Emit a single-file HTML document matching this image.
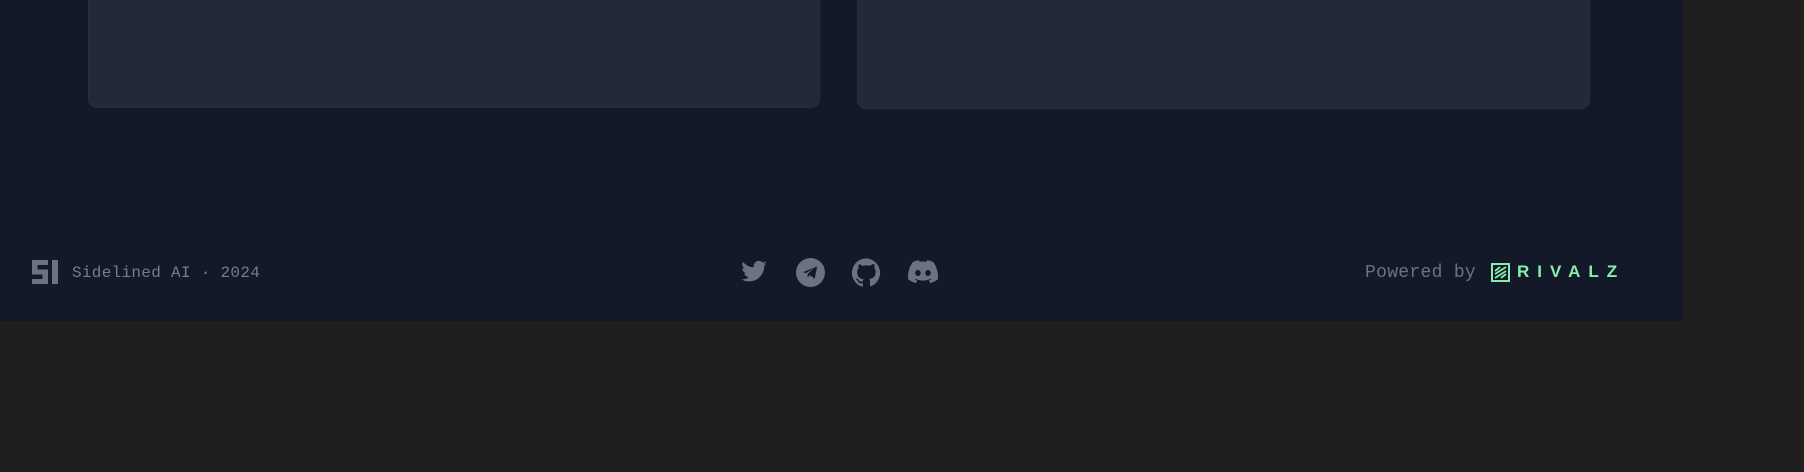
<!DOCTYPE html>
<html><head><style>
html,body{margin:0;padding:0;width:1804px;height:472px;background:#1f1f1f;overflow:hidden}
.page{position:absolute;left:0;top:0;width:1683px;height:321px;background:#131928}
.card{position:absolute;top:-10px;height:118px;background:#232937;border:1px solid #262d3b;border-radius:9px;box-sizing:border-box}
.t{position:absolute;font-family:"Liberation Mono",monospace;color:#6b7280;white-space:nowrap}
</style></head><body>
<div class="page">
<div class="card" style="left:88px;width:732px"></div>
<div class="card" style="left:857px;width:733px;height:119px"></div>
<svg style="position:absolute;left:32px;top:260px" width="27" height="24" viewBox="0 0 27 24">
<path fill="#6b7280" d="M0 0H16V5H5.5V9.5H16V24H0V19H10.5V14.5H0Z"/><rect x="20" y="0" width="6" height="24" fill="#6b7280"/></svg>
<div class="t" style="left:72px;top:264px;font-size:16px;letter-spacing:0.3px;color:#767d8a">Sidelined AI · 2024</div>
<svg style="position:absolute;left:740px;top:258px" width="28" height="28" viewBox="0 0 24 24"><path fill="#6b7280" d="M23 4.6c-.8.4-1.7.6-2.6.7.9-.6 1.6-1.4 2-2.5-.9.5-1.9.9-2.9 1.1a4.5 4.5 0 0 0-7.7 4.1C8 7.8 4.7 6 2.5 3.3c-1.5 2.6.4 5 1.4 5.9-.7 0-1.4-.2-2-.5 0 2.2 1.6 4 3.6 4.4-.7.2-1.4.2-2 .1.6 1.8 2.2 3.1 4.2 3.1A9 9 0 0 1 1 18.2 12.8 12.8 0 0 0 7.9 20c8.3 0 12.9-6.9 12.9-12.9v-.6c.9-.6 1.6-1.4 2.2-2.3z"/></svg>
<svg style="position:absolute;left:796px;top:258px" width="29" height="29" viewBox="0 0 24 24"><circle cx="12" cy="12" r="12" fill="#6b7280"/><path fill="#131928" d="M5.5 11.8 17.5 7l-2 10.3-4-3.1-2 2 .2-3.1 5.3-4.8-6.6 4.1z"/></svg>
<svg style="position:absolute;left:852px;top:258px" width="29" height="29" viewBox="0 0 24 24"><path fill="#6b7280" d="M12 .3a12 12 0 0 0-3.8 23.4c.6.1.8-.3.8-.6v-2.2c-3.3.7-4-1.4-4-1.4-.6-1.4-1.4-1.8-1.4-1.8-1.1-.7.1-.7.1-.7 1.2.1 1.8 1.2 1.8 1.2 1.1 1.8 2.8 1.3 3.5 1 .1-.8.4-1.300.8-1.6-2.7-.3-5.5-1.3-5.5-5.9 0-1.3.5-2.4 1.2-3.2-.1-.3-.5-1.5.1-3.2 0 0 1-.3 3.3 1.2a11.5 11.5 0 0 1 6 0C17.3 4.7 18.3 5 18.3 5c.7 1.7.3 2.9.1 3.2.8.8 1.2 1.9 1.2 3.2 0 4.6-2.8 5.6-5.5 5.9.4.4.8 1.1.8 2.2v3.3c0 .3.2.7.8.6A12 12 0 0 0 12 .3"/></svg>
<svg style="position:absolute;left:908px;top:259px" width="30" height="26" viewBox="0 0 24 19"><path fill="#6b7280" d="M20.3 1.6A19.8 19.8 0 0 0 15.4 0l-.6 1.3a18.4 18.4 0 0 0-5.5 0L8.6 0a19.7 19.7 0 0 0-4.9 1.6C.5 6.3-.3 10.9.1 15.4a19.900 19.900 0 0 0 6 3l1.3-2c-.7-.3-1.4-.6-2-1l.5-.4a14.2 14.2 0 0 0 12.2 0l.5.4c-.6.4-1.3.7-2 1l1.3 2a19.8 19.8 0 0 0 6-3c.5-5.2-.9-9.8-3.6-13.8zM8 12.7c-1.2 0-2.2-1.1-2.2-2.4S6.8 7.9 8 7.9s2.2 1.1 2.2 2.4-1 2.4-2.2 2.4zm8 0c-1.2 0-2.2-1.1-2.2-2.4s1-2.4 2.2-2.4 2.2 1.1 2.2 2.4-1 2.4-2.2 2.4z"/></svg>
<div class="t" style="left:1365px;top:263px;font-size:18px;letter-spacing:0.3px">Powered by</div>
<svg style="position:absolute;left:1491px;top:263px" width="19" height="19" viewBox="0 0 19 19"><rect x="1" y="1" width="17" height="17" fill="none" stroke="#86efac" stroke-width="2"/><path d="M4 8 9 4M4 11l11-7M4 15l11-7M10 15l5-4" stroke="#86efac" stroke-width="1.8"/></svg>
<div class="t" style="left:1517px;top:262px;font-size:17px;color:#86efac;font-family:'Liberation Sans',sans-serif;font-weight:bold;letter-spacing:8px">RIVALZ</div>
</div>
</body></html>
